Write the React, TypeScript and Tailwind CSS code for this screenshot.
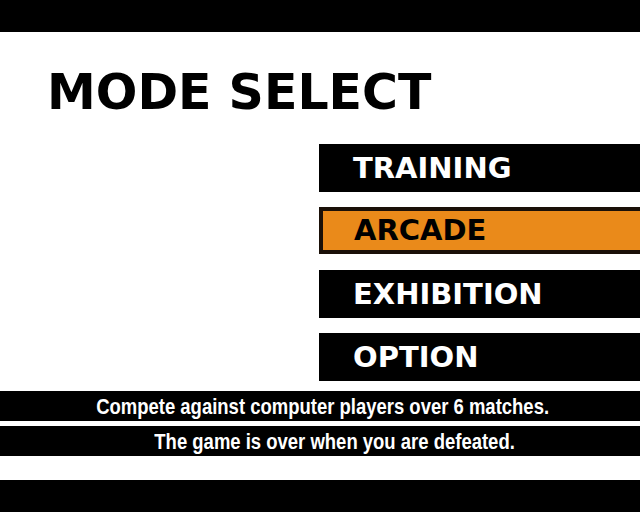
export default function App() {
  const items = ['TRAINING', 'ARCADE', 'EXHIBITION', 'OPTION'];

  return (
    <div className="w-[640px] h-[512px] bg-white flex flex-col overflow-hidden">
      {/* top letterbox */}
      <div className="h-8 bg-black shrink-0" />

      {/* title */}
      <h1
        className="mt-[36px] ml-[47px] text-[49px] leading-none font-bold text-black"
        style={{ fontFamily: '"DejaVu Sans", sans-serif' }}
      >
        MODE SELECT
      </h1>

      {/* menu */}
      <div
        className="mt-[27px] ml-[319px] flex flex-col gap-[15px]"
        style={{ fontFamily: '"DejaVu Sans", sans-serif' }}
      >
        {items.map((label) =>
          label === 'ARCADE' ? (
            <div
              key={label}
              className="h-[47px] mb-[1px] bg-[#ea8a1a] border-4 border-r-0 border-[#1a1008] flex items-center pl-[31px] text-[29px] font-bold leading-none text-black"
            >
              {label}
            </div>
          ) : (
            <div
              key={label}
              className="h-12 bg-black flex items-center pl-[34px] text-[29px] font-bold leading-none text-white"
            >
              {label}
            </div>
          )
        )}
      </div>

      {/* description */}
      <div
        className="mt-[10px] flex flex-col gap-[5px] text-white text-[22px] font-bold leading-none"
        style={{ fontFamily: '"Liberation Sans", sans-serif' }}
      >
        <div className="h-[30px] bg-black flex items-center justify-center pl-[6px] pt-[2px]">
          <span className="inline-block whitespace-nowrap scale-x-[0.84]">
            Compete against computer players over 6 matches.
          </span>
        </div>
        <div className="h-[30px] bg-black flex items-center justify-center pl-[30px] pt-[2px]">
          <span className="inline-block whitespace-nowrap scale-x-[0.84]">
            The game is over when you are defeated.
          </span>
        </div>
      </div>

      {/* bottom letterbox */}
      <div className="mt-auto h-8 bg-black shrink-0" />
    </div>
  );
}
